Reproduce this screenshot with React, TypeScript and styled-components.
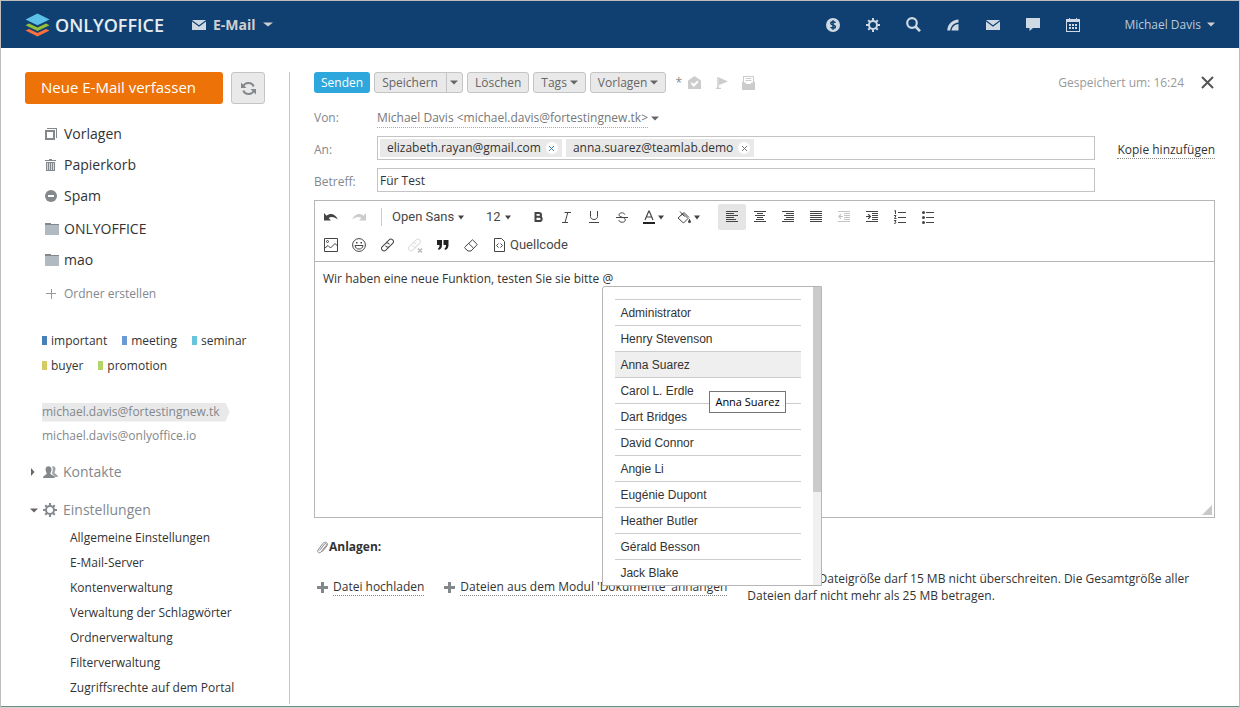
import React from "react";
import styled, { createGlobalStyle } from "styled-components";

const sans = `"Open Sans", "Noto Sans", sans-serif`;
const arial = `"Liberation Sans", Arial, sans-serif`;
const roboto = `Roboto, "Liberation Sans", sans-serif`;

const Global = createGlobalStyle`
  *, *::before, *::after { box-sizing: border-box; }
  body { margin: 0; background: #fff; color: #333; font: 12px/18px ${sans}; }
  button, input, select { font: inherit; color: inherit; margin: 0; padding: 0; border: 0; background: none; }
  button { cursor: pointer; }
  select { appearance: none; field-sizing: content; cursor: pointer; }
  ul { list-style: none; margin: 0; padding: 0; }
  a { color: inherit; text-decoration: none; }
  svg { display: block; flex: none; }
`;

/* ---------- frame ---------- */

const Page = styled.div`
  min-height: 100vh;
  display: flex;
  flex-direction: column;
  border: 1px solid #bebebe;
  border-bottom-color: #d4d4d4;
`;
const Columns = styled.div`
  flex: 1;
  display: flex;
  padding: 24px 24px 2px;
  border-bottom: 1px solid #6b8f82;
`;

/* ---------- header ---------- */

const Header = styled.header`
  display: flex;
  align-items: center;
  height: 47px;
  padding: 0 24px;
  background: #0f4071;
  color: #cfd9e3;
`;
const Brand = styled.a`
  display: flex;
  align-items: center;
  gap: 5px;
  font-size: 18px;
  line-height: 24px;
  font-weight: 600;
  color: #e7ecf1;
`;
const ModuleButton = styled.button`
  display: flex;
  align-items: center;
  gap: 7px;
  margin-left: 28px;
  font-size: 14px;
  font-weight: 700;
  color: #cfcfcf;
`;
const HeaderNav = styled.nav`
  display: flex;
  margin-left: auto;
`;
const HeaderLink = styled.a`
  display: flex;
  align-items: center;
  justify-content: center;
  width: 40px;
  height: 40px;
`;
const UserButton = styled.button`
  display: flex;
  align-items: center;
  gap: 6px;
  margin-left: 31px;
  color: #bccad8;
`;

/* ---------- sidebar ---------- */

const Sidebar = styled.aside`
  flex: none;
  width: 265px;
  border-right: 1px solid #c8c8c8;
`;
const ComposeRow = styled.div`
  display: flex;
  gap: 8px;
  margin-bottom: 14px;
`;
const ComposeButton = styled.button`
  width: 198px;
  height: 32px;
  padding: 0 16px 2px;
  border-radius: 3px;
  background: #ed7309;
  color: #fff;
  font-size: 15px;
  text-align: left;
`;
const RefreshButton = styled.button`
  display: flex;
  align-items: center;
  justify-content: center;
  width: 34px;
  height: 32px;
  border: 1px solid #c4c4c4;
  border-radius: 3px;
  background: #e9e9e9;
`;
const FolderList = styled.ul`
  padding: 0 0 2px 20px;
`;
const FolderLink = styled.a<{ $muted?: boolean }>`
  display: grid;
  grid-template-columns: 19px 1fr;
  align-items: center;
  height: 31px;
  font-size: ${(p) => (p.$muted ? 12 : 14)}px;
  color: ${(p) => (p.$muted ? "#83888d" : "#333")};
`;
const NewFolder = styled.div`
  padding: 1px 0 19px 20px;
`;
const TagList = styled.ul`
  display: flex;
  flex-wrap: wrap;
  column-gap: 15px;
  padding: 0 24px 22px 17px;
`;
const Tag = styled.li<{ $color: string }>`
  display: flex;
  align-items: center;
  gap: 4px;
  height: 25px;
  &::before {
    content: "";
    width: 5px;
    height: 9px;
    background: ${(p) => p.$color};
  }
`;
const AccountList = styled.ul`
  padding: 0 0 5px 17px;
`;
const Account = styled.li`
  display: flex;
  align-items: center;
  height: 24px;
  color: #83888d;
`;
const AccountLink = styled.a<{ $current?: boolean }>`
  height: 19px;
  padding-right: 10px;
  background: ${(p) => (p.$current ? "#e9e9e9" : "none")};
  clip-path: polygon(0 0, calc(100% - 4px) 0, 100% 50%, calc(100% - 4px) 100%, 0 100%);
`;
const SectionLink = styled.a`
  display: grid;
  grid-template-columns: 13px 20px 1fr;
  align-items: center;
  height: 38px;
  margin-left: 5px;
  font-size: 14px;
  color: #83888d;
`;
const SettingsList = styled.ul`
  padding-left: 45px;
  margin-top: -4px;
`;
const SettingsItem = styled.li`
  line-height: 25px;
`;

/* ---------- message form ---------- */

const Content = styled.main`
  flex: 1;
  min-width: 0;
  padding-left: 24px;
`;
const Actions = styled.div`
  display: flex;
  align-items: center;
  gap: 4px;
  height: 21px;
  margin-bottom: 11px;
`;
const ActionButton = styled.button<{ $primary?: boolean }>`
  display: flex;
  align-items: center;
  gap: 3px;
  height: 21px;
  padding: 0 7px;
  border: ${(p) => (p.$primary ? "0" : "1px solid #c4c4c4")};
  border-radius: 3px;
  background: ${(p) => (p.$primary ? "#2da7dc" : "#e9e9e9")};
  color: ${(p) => (p.$primary ? "#fff" : "#666")};
`;
const SplitButton = styled.div`
  display: flex;
  height: 21px;
  border: 1px solid #c4c4c4;
  border-radius: 3px;
  background: #e9e9e9;
  color: #666;
`;
const SplitMain = styled.button`
  padding: 0 8px 0 7px;
  line-height: 19px;
`;
const SplitMore = styled.button`
  display: flex;
  align-items: center;
  justify-content: center;
  width: 16px;
  border-left: 1px solid #c4c4c4;
`;
const Flags = styled.div`
  display: flex;
  align-items: center;
  gap: 14px;
  margin-left: 5px;
  color: #888;
`;
const FlagButton = styled.button`
  display: flex;
  width: 13px;
  justify-content: center;
`;
const Star = styled.span`
  width: 7px;
  margin-right: -8px;
`;
const Saved = styled.span`
  margin-left: auto;
  color: #999;
`;
const CloseButton = styled.button`
  margin: 0 1px 0 13px;
`;
const Field = styled.div`
  display: grid;
  grid-template-columns: 63px minmax(0, 1fr) 120px;
  align-items: center;
  height: 24px;
  margin-bottom: 8px;
`;
const FieldLabel = styled.label`
  padding-top: 4px;
  color: #83888d;
`;
const From = styled.div`
  display: flex;
  align-items: center;
  gap: 3px;
  padding-top: 5px;
  color: #777;
`;
const FromSelect = styled.select`
  border-bottom: 1px dotted #aaa;
`;
const Recipients = styled.div`
  display: flex;
  align-items: center;
  gap: 4px;
  height: 24px;
  padding: 0 2px;
  border: 1px solid #c4c4c4;
`;
const Chip = styled.span`
  display: flex;
  align-items: center;
  gap: 5px;
  height: 18px;
  padding: 0 4px 0 7px;
  background: #e9e9e9;
`;
const ChipRemove = styled.button`
  display: flex;
  align-items: center;
  justify-content: center;
  width: 12px;
  height: 12px;
  border-radius: 50%;
  background: #fff;
`;
const RecipientInput = styled.input`
  flex: 1;
  min-width: 0;
  outline: 0;
`;
const SubjectInput = styled.input`
  width: 100%;
  height: 24px;
  padding: 0 2px !important;
  border: 1px solid #c4c4c4 !important;
`;
const DottedLink = styled.a`
  border-bottom: 1px dotted #888;
  line-height: 17px;
`;
const CopyCell = styled.div`
  text-align: right;
  padding-top: 3px;
`;

/* ---------- editor ---------- */

const Editor = styled.section`
  position: relative;
  border: 1px solid #b6b6b6;
`;
const Tools = styled.div`
  display: flex;
  flex-direction: column;
  gap: 2px;
  padding: 3px 2px;
  border-bottom: 1px solid #b6b6b6;
  font-family: ${roboto};
  font-size: 13px;
  color: #484848;
`;
const ToolRow = styled.div`
  display: flex;
  align-items: center;
  height: 26px;
`;
const Tool = styled.button<{ $active?: boolean; $wide?: boolean }>`
  display: flex;
  align-items: center;
  justify-content: center;
  gap: 3px;
  width: ${(p) => (p.$wide ? 35 : 28)}px;
  height: 26px;
  border-radius: 2px;
  background: ${(p) => (p.$active ? "#e5e5e5" : "none")};
`;
const SourceTool = styled.button`
  display: flex;
  align-items: center;
  gap: 5px;
  height: 26px;
  padding: 0 9px;
`;
const Divider = styled.span`
  width: 1px;
  height: 18px;
  margin: 0 10px 0 8px;
  background: #ccc;
`;
const Combo = styled.label<{ $width: number }>`
  display: flex;
  align-items: center;
  gap: 4px;
  width: ${(p) => p.$width}px;
`;
const Group = styled.div`
  display: flex;
  margin-right: 12px;
`;
const Body = styled.div`
  height: 255px;
  padding: 8px;
  outline: 0;
  font-size: 12px;
  line-height: 18px;
`;
const Mention = styled.span`
  position: relative;
  display: inline-block;
`;
const MentionMenu = styled.div`
  position: absolute;
  top: 16px;
  left: 0;
  z-index: 1;
  display: flex;
  width: 220px;
  height: 300px;
  border: 1px solid #b6b6b6;
  border-radius: 3px 0 0 0;
  background: #fff;
`;
const MentionList = styled.ul`
  flex: 1;
  padding: 12px !important;
  padding-bottom: 0 !important;
  overflow: hidden;
  font: 12px/26px ${arial};
`;
const MentionItem = styled.li<{ $hover?: boolean }>`
  height: 26px;
  padding-left: 5px;
  border-top: 1px solid #ccc;
  background: ${(p) => (p.$hover ? "#efefef" : "none")};
`;
const ScrollTrack = styled.div`
  width: 8px;
  background: #f0f0f0;
`;
const ScrollThumb = styled.div`
  height: 205px;
  background: #cbcbcb;
`;
const Tooltip = styled.div`
  position: absolute;
  top: 104px;
  left: 106px;
  padding: 1px 5px;
  border: 1px solid #767676;
  background: #fff;
  color: #000;
  font-size: 11px;
  line-height: 18px;
  white-space: nowrap;
`;
const Grip = styled.div`
  position: absolute;
  right: 2px;
  bottom: 2px;
`;

/* ---------- attachments ---------- */

const AttachTitle = styled.h2`
  display: flex;
  align-items: center;
  margin: 20px 0 14px;
  padding-left: 2px;
  font-size: 12px;
  line-height: 18px;
`;
const AttachRow = styled.div`
  display: flex;
  align-items: flex-start;
  gap: 20px;
  padding-left: 3px;
`;
const AttachAction = styled.div`
  display: flex;
  align-items: center;
  gap: 5px;
  flex: none;
  height: 18px;
  margin-top: 8px;
`;
const AttachNote = styled.p`
  margin: 0;
  line-height: 17px;
`;

/* ---------- icons ---------- */

type IconProps = { w: number; h: number; children: React.ReactNode; crisp?: boolean };
const Svg = ({ w, h, children, crisp }: IconProps) => (
  <svg width={w} height={h} viewBox={`0 0 ${w} ${h}`} fill="none" aria-hidden="true" shapeRendering={crisp ? "crispEdges" : undefined}>
    {children}
  </svg>
);
const Caret = ({ w = 8, color = "#666" }: { w?: number; color?: string }) => (
  <Svg w={w} h={5}>
    <path d={`M0 .5H${w}L${w / 2} 4.5z`} fill={color} />
  </Svg>
);
const Logo = () => (
  <Svg w={25} h={24}>
    <path d="M.5 17.500 4 16l8.500 4L21 16l3.500 1.500L12.500 23.500z" fill="#ff6f3d" />
    <path d="M.5 12.200 4 10.600l8.500 4 8.500-4 3.500 1.600-12 5.800z" fill="#95c038" />
    <path d="M.5 6.400 12.500.5l12 5.900-12 5.800z" fill="#5dc0e8" />
  </Svg>
);
const Mail = () => (
  <Svg w={14} h={10}>
    <path d="M0 0h14L7 5.200z" fill="#cfd9e3" />
    <path d="M0 1.500 7 6.700l7-5.200V10H0z" fill="#cfd9e3" />
  </Svg>
);
const Gear = ({ color }: { color: string }) => (
  <Svg w={14} h={14}>
    <circle cx="7" cy="7" r="4" stroke={color} strokeWidth="2" />
    <path d="M7 0v2.500M7 11.500V14M0 7h2.500M11.500 7H14M2.200 2.200l1.600 1.600M10.200 10.200l1.600 1.600M2.200 11.800l1.600-1.600M10.200 3.800l1.600-1.600" stroke={color} strokeWidth="2" />
  </Svg>
);
const Dollar = () => (
  <Svg w={14} h={14}>
    <circle cx="7" cy="7" r="7" fill="#cfd9e3" />
    <path d="M9.400 4.800C8.900 4 8 3.800 7 3.800c-1.300 0-2.200.5-2.200 1.500C4.800 7.600 9.400 6.300 9.400 8.700c0 1-1 1.500-2.300 1.500-1.100 0-2-.3-2.500-1.100M7 2.300v9.400" stroke="#0f4071" strokeWidth="1.500" />
  </Svg>
);
const Search = () => (
  <Svg w={15} h={15}>
    <circle cx="6" cy="6" r="4.800" stroke="#cfd9e3" strokeWidth="2.200" />
    <path d="m9.500 9.500 4.500 4.700" stroke="#cfd9e3" strokeWidth="2.600" />
  </Svg>
);
const Feed = () => (
  <Svg w={12} h={12}>
    <path d="M11.500.5v3C7 4 4 6.500 3.200 11.500H.2C.8 5 5 1 11.500.5z" fill="#cfd9e3" />
    <path d="M11.500 5v6.500h-7C5 8 7.500 5.500 11.500 5z" fill="#cfd9e3" />
  </Svg>
);
const Chat = () => (
  <Svg w={14} h={13}>
    <path d="M0 0h14v10H7l-3.500 3v-3H0z" fill="#cfd9e3" />
  </Svg>
);
const Calendar = () => (
  <Svg w={14} h={14} crisp>
    <path d="M0 1h14v13H0zM1 4v9h12V4z" fillRule="evenodd" fill="#cfd9e3" />
    <path d="M3 0h1v1H3zM10 0h1v1h-1zM3 6h2v2H3zM6 6h2v2H6zM9 6h2v2H9zM3 9h2v2H3zM6 9h2v2H6zM9 9h2v2H9z" fill="#cfd9e3" />
  </Svg>
);
const Refresh = () => (
  <Svg w={15} h={15}>
    <path d="M2 6C2.700 3.700 4.800 2 7.500 2c2.400 0 4.300 1.300 5.200 3.500M13 9c-.7 2.300-2.800 4-5.500 4-2.400 0-4.300-1.300-5.200-3.500" stroke="#83888d" strokeWidth="2" />
    <path d="M0 1.500V7h5.500zM15 13.500V8H9.500z" fill="#83888d" />
  </Svg>
);
const Copies = () => (
  <Svg w={12} h={12} crisp>
    <path d="M0 2h10v10H0zM2 4v6h6V4z" fillRule="evenodd" fill="#83888d" />
    <path d="M2 0h10v10h-1V1H2z" fill="#83888d" />
  </Svg>
);
const Trash = () => (
  <Svg w={11} h={12} crisp>
    <path d="M4 0h3v1h4v1H0V1h4zM1 3h9v9H1z" fill="#83888d" />
    <path d="M3 4v7M5 4v7M7 4v7M9 4v7" transform="translate(-.5 0)" stroke="#d5d7d8" />
  </Svg>
);
const Spam = () => (
  <Svg w={12} h={12}>
    <circle cx="6" cy="6" r="6" fill="#83888d" />
    <path d="M3 5h6v2H3z" fill="#fff" />
  </Svg>
);
const Folder = () => (
  <Svg w={14} h={12} crisp>
    <path d="M0 0h6v1h8v2H0z" fill="#83888d" />
    <path d="M0 2h14v10H0z" fill="#b2bac1" />
    <path d="M0 1h14v1H0z" fill="#83888d" />
  </Svg>
);
const ThinPlus = () => (
  <Svg w={12} h={11} crisp>
    <path d="M5 0v10M0 5h10" transform="translate(1 .5)" stroke="#999" />
  </Svg>
);
const People = () => (
  <Svg w={15} h={12}>
    <path d="M9 .5c2-.8 3.800.5 3.500 2.800-.1 1.500-.8 2.300-1 3.200.3 1.500 3 1.500 3.500 4.500h-3.500C11 9 9 8 8.800 7c.8-1.500 1.700-4 .2-6.500z" fill="#a0a4a8" />
    <path d="M0 12c.3-3 3.500-3 3.800-4.600C3.500 6.500 2.600 5.500 2.600 3.500 2.600 1.300 3.800.2 5.500.2s3 1.100 3 3.300c0 2-.9 3-1.200 3.900C7.600 9 11.500 9 11.800 12z" fill="#83888d" />
  </Svg>
);
const Right = () => (
  <Svg w={5} h={8}>
    <path d="M1 0v8l3.500-4z" fill="#666" />
  </Svg>
);
const Cross = ({ s, color, sw }: { s: number; color: string; sw: number }) => (
  <Svg w={s} h={s}>
    <path d={`M1 1l${s - 2} ${s - 2}M${s - 1} 1L1 ${s - 1}`} stroke={color} strokeWidth={sw} />
  </Svg>
);
const ReadFlag = () => (
  <Svg w={13} h={13}>
    <path d="M0 4.500 6.500 0 13 4.500V13H0z" fill="#ccc" />
    <path d="m3.500 7 2.300 2.500L10 5.200" stroke="#fff" strokeWidth="2" />
  </Svg>
);
const Flag = () => (
  <Svg w={12} h={12}>
    <path d="M2 0v11M0 11.500h5" stroke="#ccc" strokeWidth="1.500" />
    <path d="M3 .5 12 4.500 3 8z" fill="#ccc" />
  </Svg>
);
const Receipt = () => (
  <Svg w={13} h={14}>
    <path d="M1 0h11v5l1 1.500V14H0V6.500L1 5z" fill="#ccc" />
    <path d="M2 1h9v5.500H9.500L8.500 8h-4l-1-1.500H2z" fill="#fff" />
    <path d="M3.500 2.500h6M3.500 4.500h6" stroke="#ccc" />
  </Svg>
);
const Clip = () => (
  <Svg w={13} h={13}>
    <path d="m3.500 9.500 5-6.500c1-1.200 2.700 0 1.800 1.300L5 11c-1.500 1.800-4.200.2-3-2l4.800-6.500C9 0 12.800 1.500 11 4.800L6.500 10.500" stroke="#888" />
  </Svg>
);
const Plus = () => (
  <Svg w={11} h={11} crisp>
    <path d="M4 0h3v4h4v3H7v4H4V7H0V4h4z" fill="#83888d" />
  </Svg>
);

const ink = "#444";
const Undo = ({ color = ink, flip }: { color?: string; flip?: boolean }) => (
  <Svg w={14} h={8}>
    <g transform={flip ? "matrix(-1 0 0 1 14 0)" : undefined}>
      <path d="M0 0v7.500h7L4.600 5C7 3.200 10.500 3.500 13.800 6.500 11.500 1 6.500-.5 2.500 2.800z" fill={color} />
    </g>
  </Svg>
);
const Bold = () => (
  <Svg w={9} h={10}>
    <path d="M1.500 1h3.300c3 0 3 3.800 0 3.800H1.500zM1.500 4.800h3.700c3.300 0 3.300 4.200 0 4.200H1.500z" stroke={ink} strokeWidth="2" />
  </Svg>
);
const Italic = () => (
  <Svg w={9} h={11}>
    <path d="M2.500.5H9M0 10.500h6M5.800.5 3 10.500" stroke={ink} />
  </Svg>
);
const Underline = () => (
  <Svg w={10} h={12}>
    <path d="M1.500 0v5.500c0 4 7 4 7 0V0M0 11.500h10" stroke={ink} />
  </Svg>
);
const Strike = () => (
  <Svg w={12} h={11}>
    <path d="M8.800 2.500C8.300.3 3 .2 3 2.800c0 1.500 1.500 2 3.300 2.500 2 .5 3 1.200 3 2.600 0 3.200-6 3-6.500.3M0 5.500h12" stroke={ink} />
  </Svg>
);
const TextColor = () => (
  <Svg w={12} h={14}>
    <path d="M2 10 5.800 1h.4L10 10M3.200 7h5.600" stroke={ink} strokeWidth="1.200" />
    <path d="M0 12h12v2H0z" fill="#222" />
  </Svg>
);
const Bucket = () => (
  <Svg w={14} h={13}>
    <path d="M6 2.500 11 7.500l-4.500 4.500-5.500-5zM3 .5l4.500 5M4 4.500 7 1.500l5 5" stroke={ink} />
    <circle cx="12.500" cy="10.500" r="1.500" fill={ink} />
    <path d="M12.500 8v2" stroke={ink} />
  </Svg>
);
const lineSets: Record<string, [number, number][]> = {
  left: [[0, 12], [0, 8], [0, 12], [0, 8], [0, 10], [0, 12]],
  center: [[0, 12], [3, 6], [1, 10], [3, 6], [2, 8], [0, 12]],
  right: [[0, 12], [4, 8], [2, 10], [4, 8], [2, 10], [0, 12]],
  justify: [[0, 12], [0, 12], [0, 12], [0, 12], [0, 12], [0, 12]],
};
const Align = ({ kind }: { kind: string }) => (
  <Svg w={12} h={12} crisp>
    {lineSets[kind].map(([x, w], i) => (
      <rect key={i} x={x} y={i * 2} width={w} height={1} fill={ink} />
    ))}
  </Svg>
);
const Indent = ({ color = ink, out }: { color?: string; out?: boolean }) => (
  <Svg w={12} h={12}>
    <path d="M0 0h12v1H0zM6 2h6v1H6zM6 4h6v1H6zM6 6h6v1H6zM6 8h6v1H6zM0 10h12v1H0z" fill={color} />
    <path d={out ? "M5 5.500H1M3 3.200.8 5.500 3 7.800" : "M0 5.500h4M2.200 3.200 4.400 5.500 2.200 7.800"} stroke={color} strokeWidth="1.200" />
  </Svg>
);
const Numbered = () => (
  <Svg w={12} h={14}>
    <path d="M4 2.500h8M4 7.500h8M4 12.500h8" stroke={ink} />
    <path d="M.3 1 1.500.5V4M0 5.500h2L.5 8.500H2.500M0 10.500h2L1 12c1.800 0 1 1.800-1 1.300" stroke={ink} />
  </Svg>
);
const Bullets = () => (
  <Svg w={12} h={13}>
    <path d="M4 1.500h8M4 6.500h8M4 11.500h8" stroke={ink} />
    <circle cx="1.500" cy="1.500" r="1.500" fill={ink} />
    <circle cx="1.500" cy="6.500" r="1.500" fill={ink} />
    <circle cx="1.500" cy="11.500" r="1.500" fill={ink} />
  </Svg>
);
const Picture = () => (
  <Svg w={14} h={14}>
    <path d="M.5.5h13v13H.5z" stroke={ink} />
    <circle cx="3.500" cy="3.500" r="1" stroke={ink} />
    <path d="m1 10 3-2.500L6.500 10 11 5.500 13.500 8" stroke={ink} />
  </Svg>
);
const Smiley = () => (
  <Svg w={14} h={14}>
    <circle cx="7" cy="7" r="6.400" stroke={ink} />
    <path d="M3 7.500c.3 4.700 7.700 4.700 8 0z" stroke={ink} />
    <path d="M4 4h1.500v1.500H4zM8.500 4H10v1.500H8.500z" fill={ink} />
  </Svg>
);
const ChainShape = ({ color }: { color: string }) => (
  <g transform="rotate(-45 6.500 7)" stroke={color}>
    <path d="M6 9.500H1.700a2.500 2.500 0 0 1 0-5H6a2.500 2.500 0 0 1 2.300 3.500" />
    <path d="M7 4.500h4.300a2.500 2.500 0 0 1 0 5H7A2.500 2.500 0 0 1 4.700 6" />
  </g>
);
const Link = () => (
  <Svg w={13} h={14}>
    <ChainShape color={ink} />
  </Svg>
);
const Unlink = () => (
  <Svg w={15} h={15}>
    <ChainShape color="#ddd" />
    <path d="m10 10.500 4 4M14 10.500l-4 4" stroke="#bbb" strokeWidth="1.500" />
  </Svg>
);
const Quote = () => (
  <Svg w={12} h={10}>
    <path d="M0 0h5v5c0 2.500-1 4.300-3.500 5L1 8.500c1-.5 1.500-1.500 1.500-3.500H0zM6.500 0h5v5c0 2.500-1 4.300-3.500 5l-.5-1.500c1-.5 1.500-1.500 1.500-3.500H6.500z" fill="#222" />
  </Svg>
);
const Eraser = () => (
  <Svg w={14} h={13}>
    <path d="M8.500.8 1 7.800c-.5.500-.5 1 0 1.500L4 12h3l6.300-6.500zM4.800 4.500 9.500 9.200" stroke={ink} />
  </Svg>
);
const Source = () => (
  <Svg w={11} h={14}>
    <path d="M.5.5h7l3 3v10H.5z" stroke={ink} />
    <path d="M4.500 5.500 2.500 7.500l2 2M6.500 5.500l2 2-2 2" stroke={ink} />
  </Svg>
);

/* ---------- data ---------- */

const modules = [
  ["Zahlungen", <Dollar />],
  ["Einstellungen", <Gear color="#cfd9e3" />],
  ["Suche", <Search />],
  ["Feed", <Feed />],
  ["E-Mail", <Mail />],
  ["Chat", <Chat />],
  ["Kalender", <Calendar />],
] as const;
const systemFolders = [["Vorlagen", <Copies />], ["Papierkorb", <Trash />], ["Spam", <Spam />]] as const;
const userFolders = ["ONLYOFFICE", "mao"];
const tags = [
  ["important", "#4781b8"],
  ["meeting", "#6a9ad3"],
  ["seminar", "#67c5dc"],
  ["buyer", "#d5cb66"],
  ["promotion", "#b5d468"],
];
const settings = [
  "Allgemeine Einstellungen",
  "E-Mail-Server",
  "Kontenverwaltung",
  "Verwaltung der Schlagwörter",
  "Ordnerverwaltung",
  "Filterverwaltung",
  "Zugriffsrechte auf dem Portal",
];
const recipients = [["elizabeth.rayan@gmail.com", "#4781b8"], ["anna.suarez@teamlab.demo", "#777"]];
const people = [
  "Administrator", "Henry Stevenson", "Anna Suarez", "Carol L. Erdle", "Dart Bridges", "David Connor",
  "Angie Li", "Eugénie Dupont", "Heather Butler", "Gérald Besson", "Jack Blake",
];

export default function App() {
  return (
    <Page>
      <Global />
      <Header>
        <Brand href="#"><Logo />ONLYOFFICE</Brand>
        <ModuleButton><Mail />E-Mail<Caret w={10} color="#cfcfcf" /></ModuleButton>
        <HeaderNav>
          {modules.map(([name, icon]) => (
            <HeaderLink key={name} href="#" aria-label={name}>{icon}</HeaderLink>
          ))}
        </HeaderNav>
        <UserButton>Michael Davis<Caret color="#cfcfcf" /></UserButton>
      </Header>

      <Columns>
        <Sidebar>
          <ComposeRow>
            <ComposeButton>Neue E-Mail verfassen</ComposeButton>
            <RefreshButton aria-label="Aktualisieren"><Refresh /></RefreshButton>
          </ComposeRow>
          <FolderList>
            {systemFolders.map(([name, icon]) => (
              <li key={name}><FolderLink href="#">{icon}{name}</FolderLink></li>
            ))}
          </FolderList>
          <FolderList>
            {userFolders.map((name) => (
              <li key={name}><FolderLink href="#"><Folder />{name}</FolderLink></li>
            ))}
          </FolderList>
          <NewFolder>
            <FolderLink href="#" $muted><ThinPlus />Ordner erstellen</FolderLink>
          </NewFolder>
          <TagList>
            {tags.map(([name, color]) => (
              <Tag key={name} $color={color}>{name}</Tag>
            ))}
          </TagList>
          <AccountList>
            <Account><AccountLink href="#" $current>michael.davis@fortestingnew.tk</AccountLink></Account>
            <Account><AccountLink href="#">michael.davis@onlyoffice.io</AccountLink></Account>
          </AccountList>
          <SectionLink href="#"><Right /><People />Kontakte</SectionLink>
          <SectionLink href="#"><Caret /><Gear color="#83888d" />Einstellungen</SectionLink>
          <SettingsList>
            {settings.map((name) => (
              <SettingsItem key={name}><a href="#">{name}</a></SettingsItem>
            ))}
          </SettingsList>
        </Sidebar>

        <Content>
          <Actions>
            <ActionButton $primary>Senden</ActionButton>
            <SplitButton>
              <SplitMain>Speichern</SplitMain>
              <SplitMore aria-label="Weitere Speicheroptionen"><Caret /></SplitMore>
            </SplitButton>
            <ActionButton>Löschen</ActionButton>
            <ActionButton>Tags<Caret /></ActionButton>
            <ActionButton>Vorlagen<Caret /></ActionButton>
            <Flags>
              <Star>*</Star>
              <FlagButton aria-label="Lesebestätigung"><ReadFlag /></FlagButton>
              <FlagButton aria-label="Wichtig"><Flag /></FlagButton>
              <FlagButton aria-label="Empfangsbestätigung"><Receipt /></FlagButton>
            </Flags>
            <Saved>Gespeichert um: 16:24</Saved>
            <CloseButton aria-label="Schließen"><Cross s={13} color="#555" sw={2} /></CloseButton>
          </Actions>

          <Field>
            <FieldLabel htmlFor="from">Von:</FieldLabel>
            <From>
              <FromSelect id="from">
                <option>Michael Davis &lt;michael.davis@fortestingnew.tk&gt;</option>
              </FromSelect>
              <Caret />
            </From>
          </Field>
          <Field>
            <FieldLabel htmlFor="to">An:</FieldLabel>
            <Recipients>
              {recipients.map(([mail, color]) => (
                <Chip key={mail}>
                  {mail}
                  <ChipRemove aria-label={`${mail} entfernen`}><Cross s={7} color={color} sw={1} /></ChipRemove>
                </Chip>
              ))}
              <RecipientInput id="to" />
            </Recipients>
            <CopyCell><DottedLink href="#">Kopie hinzufügen</DottedLink></CopyCell>
          </Field>
          <Field>
            <FieldLabel htmlFor="subject">Betreff:</FieldLabel>
            <SubjectInput id="subject" defaultValue="Für Test" />
          </Field>

          <Editor>
            <Tools>
              <ToolRow>
                <Tool aria-label="Rückgängig"><Undo /></Tool>
                <Tool aria-label="Wiederherstellen"><Undo color="#ccc" flip /></Tool>
                <Divider />
                <Combo $width={94}>
                  <select aria-label="Schriftart"><option>Open Sans</option></select>
                  <Caret w={6} color={ink} />
                </Combo>
                <Combo $width={38}>
                  <select aria-label="Größe"><option>12</option></select>
                  <Caret w={6} color={ink} />
                </Combo>
                <Tool aria-label="Fett"><Bold /></Tool>
                <Tool aria-label="Kursiv"><Italic /></Tool>
                <Tool aria-label="Unterstrichen"><Underline /></Tool>
                <Tool aria-label="Durchgestrichen"><Strike /></Tool>
                <Group>
                  <Tool aria-label="Textfarbe" $wide><TextColor /><Caret w={6} color={ink} /></Tool>
                  <Tool aria-label="Hintergrundfarbe" $wide><Bucket /><Caret w={6} color={ink} /></Tool>
                </Group>
                <Tool aria-label="Linksbündig" $active><Align kind="left" /></Tool>
                <Tool aria-label="Zentriert"><Align kind="center" /></Tool>
                <Tool aria-label="Rechtsbündig"><Align kind="right" /></Tool>
                <Tool aria-label="Blocksatz"><Align kind="justify" /></Tool>
                <Tool aria-label="Einzug verkleinern"><Indent color="#c4c4c4" out /></Tool>
                <Tool aria-label="Einzug vergrößern"><Indent /></Tool>
                <Tool aria-label="Nummerierte Liste"><Numbered /></Tool>
                <Tool aria-label="Liste"><Bullets /></Tool>
              </ToolRow>
              <ToolRow>
                <Tool aria-label="Bild"><Picture /></Tool>
                <Tool aria-label="Smiley"><Smiley /></Tool>
                <Tool aria-label="Link einfügen"><Link /></Tool>
                <Tool aria-label="Link entfernen"><Unlink /></Tool>
                <Tool aria-label="Zitatblock"><Quote /></Tool>
                <Tool aria-label="Formatierung entfernen"><Eraser /></Tool>
                <SourceTool><Source />Quellcode</SourceTool>
              </ToolRow>
            </Tools>
            <Body role="textbox" aria-label="Nachricht" contentEditable suppressContentEditableWarning>
              Wir haben eine neue Funktion, testen Sie sie bitte{" "}
              <Mention>
                @
                <MentionMenu contentEditable={false}>
                  <MentionList>
                    {people.map((name) => (
                      <MentionItem key={name} $hover={name === "Anna Suarez"}>{name}</MentionItem>
                    ))}
                  </MentionList>
                  <ScrollTrack><ScrollThumb /></ScrollTrack>
                  <Tooltip role="tooltip">Anna Suarez</Tooltip>
                </MentionMenu>
              </Mention>
            </Body>
            <Grip>
              <Svg w={10} h={10}><path d="M10 0v10H0z" fill="#c8c8c8" /></Svg>
            </Grip>
          </Editor>

          <AttachTitle><Clip />Anlagen:</AttachTitle>
          <AttachRow>
            <AttachAction><Plus /><DottedLink href="#">Datei hochladen</DottedLink></AttachAction>
            <AttachAction><Plus /><DottedLink href="#">Dateien aus dem Modul 'Dokumente' anhängen</DottedLink></AttachAction>
            <AttachNote>
              Die einzelne Dateigröße darf 15 MB nicht überschreiten. Die Gesamtgröße aller Dateien darf nicht mehr als 25 MB betragen.
            </AttachNote>
          </AttachRow>
        </Content>
      </Columns>
    </Page>
  );
}
